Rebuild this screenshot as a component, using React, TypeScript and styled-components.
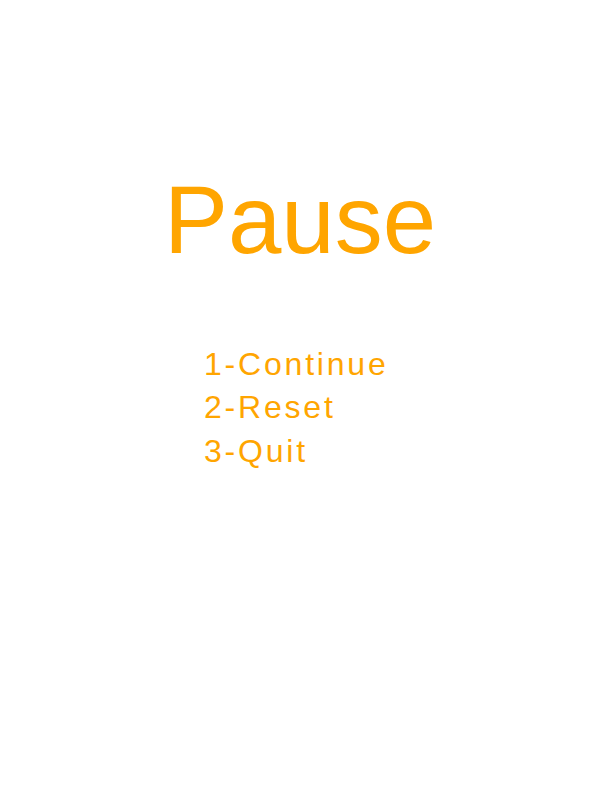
import React from "react";
import styled, { createGlobalStyle } from "styled-components";

const Global = createGlobalStyle`
  html, body { margin: 0; padding: 0; background: #ffffff; }
  body { font-family: "Liberation Sans", Arial, sans-serif; }
`;

const Screen = styled.div`
  width: 600px;
  height: 800px;
  display: flex;
  flex-direction: column;
  padding-top: 172px;
  box-sizing: border-box;
  color: #ffa500;
`;

const Title = styled.h1`
  margin: 0;
  font-weight: normal;
  font-size: 96px;
  line-height: 96px;
  text-align: center;
`;

const Menu = styled.ul`
  list-style: none;
  margin: 75px 0 0;
  padding: 0 0 0 204px;
  display: flex;
  flex-direction: column;
`;

const Item = styled.li`
  font-size: 32px;
  line-height: 43.3px;
  letter-spacing: 2.8px;
`;

const items = ["1-Continue", "2-Reset", "3-Quit"];

export default function App() {
  return (
    <>
      <Global />
      <Screen>
        <Title>Pause</Title>
        <Menu>
          {items.map((t) => (
            <Item key={t}>{t}</Item>
          ))}
        </Menu>
      </Screen>
    </>
  );
}
